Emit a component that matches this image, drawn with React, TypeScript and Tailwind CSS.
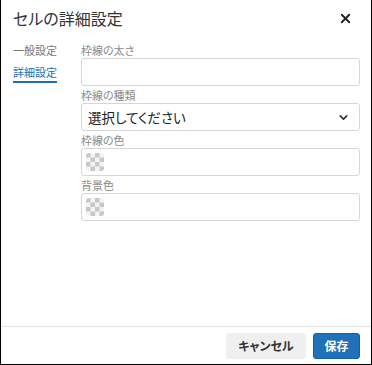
import { X, ChevronDown } from "lucide-react";

function Checker() {
  const cells = [];
  for (let r = 0; r < 4; r++) {
    for (let c = 0; c < 4; c++) {
      if ((r + c) % 2 === 0) {
        cells.push(<rect key={`${r}-${c}`} x={c * 4.5} y={r * 4.5} width="4.5" height="4.5" fill="#c8c8c8" />);
      }
    }
  }
  return (
    <svg width="18" height="18" viewBox="0 0 18 18" className="rounded-[3px]">
      <rect width="18" height="18" fill="#f4f4f4" />
      {cells}
    </svg>
  );
}

function Field({ label, children }: { label: string; children: React.ReactNode }) {
  return (
    <div className="flex flex-col">
      <div className="h-[16px] text-[11px] leading-[16px] text-[#8a8a8a]">{label}</div>
      {children}
    </div>
  );
}

export default function App() {
  return (
    <div
      className="flex h-[365px] w-[372px] flex-col border-x border-b border-black bg-white [font-feature-settings:'palt']"
      style={{ fontFamily: '"Noto Sans CJK JP", "Noto Sans", sans-serif' }}
    >
      <div className="flex h-[36px] items-center justify-between pl-[12px] pr-[18px]">
        <div className="text-[16px] leading-none text-[#333]">セルの詳細設定</div>
        <X size={15} strokeWidth={3} className="text-[#222]" />
      </div>

      <div className="flex flex-1 pt-[6px]">
        <div className="flex w-[80px] flex-col gap-[6px] pl-[12px]">
          <div className="h-[16px] text-[11px] leading-[16px] text-[#777]">一般設定</div>
          <div className="w-fit border-b-2 border-[#1f6fb5] pb-[1px] text-[11px] leading-[16px] text-[#1f6fb5]">詳細設定</div>
        </div>

        <div className="flex flex-1 flex-col gap-[1px] pr-[11px]">
          <Field label="枠線の太さ">
            <div className="h-[28px] rounded-[3px] border border-[#d6d6d6]" />
          </Field>
          <Field label="枠線の種類">
            <div className="flex h-[28px] items-center justify-between rounded-[3px] border border-[#d6d6d6] pl-[6px] pr-[9px]">
              <span className="text-[13.5px] text-[#222]">選択してください</span>
              <ChevronDown size={13} strokeWidth={3} className="text-[#333]" />
            </div>
          </Field>
          <Field label="枠線の色">
            <div className="flex h-[28px] items-center rounded-[3px] border border-[#d6d6d6] pl-[4px]">
              <Checker />
            </div>
          </Field>
          <Field label="背景色">
            <div className="flex h-[28px] items-center rounded-[3px] border border-[#d6d6d6] pl-[4px]">
              <Checker />
            </div>
          </Field>
        </div>
      </div>

      <div className="flex h-[38px] items-center justify-end gap-[7px] border-t border-[#e2e2e2] pr-[11px]">
        <button className="h-[26px] w-[80px] rounded-[3px] bg-[#efefef] text-[12px] font-bold text-[#333]">キャンセル</button>
        <button className="h-[26px] w-[47px] rounded-[3px] border border-[#17609f] bg-[#1f72b8] text-[12px] font-bold text-white">保存</button>
      </div>
    </div>
  );
}
